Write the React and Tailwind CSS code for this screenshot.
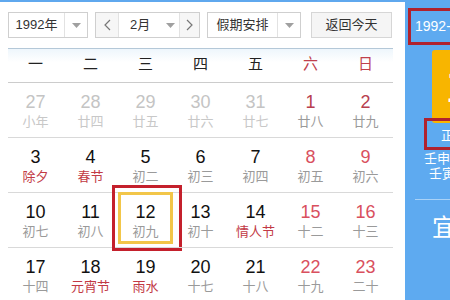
import React from 'react';

const FONT = { fontFamily: '"Liberation Sans", "Noto Sans CJK SC", sans-serif' };

const weekdays = ['一', '二', '三', '四', '五', '六', '日'];

// t: p = previous month, d = early weekend, n = normal, w = weekend
const rows = [
  [
    { d: 27, l: '小年', t: 'p' },
    { d: 28, l: '廿四', t: 'p' },
    { d: 29, l: '廿五', t: 'p' },
    { d: 30, l: '廿六', t: 'p' },
    { d: 31, l: '廿七', t: 'p' },
    { d: 1, l: '廿八', t: 'd' },
    { d: 2, l: '廿九', t: 'd' },
  ],
  [
    { d: 3, l: '除夕', t: 'n', h: true },
    { d: 4, l: '春节', t: 'n', h: true },
    { d: 5, l: '初二', t: 'n' },
    { d: 6, l: '初三', t: 'n' },
    { d: 7, l: '初四', t: 'n' },
    { d: 8, l: '初五', t: 'w' },
    { d: 9, l: '初六', t: 'w' },
  ],
  [
    { d: 10, l: '初七', t: 'n' },
    { d: 11, l: '初八', t: 'n' },
    { d: 12, l: '初九', t: 'n', sel: true },
    { d: 13, l: '初十', t: 'n' },
    { d: 14, l: '情人节', t: 'n', h: true },
    { d: 15, l: '十二', t: 'w' },
    { d: 16, l: '十三', t: 'w' },
  ],
  [
    { d: 17, l: '十四', t: 'n' },
    { d: 18, l: '元宵节', t: 'n', h: true },
    { d: 19, l: '雨水', t: 'n', h: true },
    { d: 20, l: '十七', t: 'n' },
    { d: 21, l: '十八', t: 'n' },
    { d: 22, l: '十九', t: 'w' },
    { d: 23, l: '二十', t: 'w' },
  ],
];

const Arrow = () => (
  <svg width="9" height="5" viewBox="0 0 9 5">
    <path d="M0 0 L9 0 L4.5 5 Z" fill="#a0a0a0" />
  </svg>
);

const Chevron = ({ dir }) => (
  <svg width="7" height="12" viewBox="0 0 7 12">
    <path
      d={dir === 'left' ? 'M6 1 L1 6 L6 11' : 'M1 1 L6 6 L1 11'}
      fill="none"
      stroke="#777"
      strokeWidth="1.2"
    />
  </svg>
);

const Cell = ({ c }) => {
  const numColor =
    c.t === 'p' ? 'text-[#c4c4c4]' : c.t === 'd' ? 'text-[#b8404f]' : c.t === 'w' ? 'text-[#d9505e]' : 'text-[#111]';
  const lunarColor =
    c.t === 'p' ? 'text-[#c8c8c8]' : c.h ? 'text-[#c23a45]' : 'text-[#9a9a9a]';
  return (
    <div className="relative h-[55px] w-[55px] border-b border-[#d9d9d9]">
      {c.sel && (
        <>
          <div className="absolute left-0 top-[-1px] h-[52px] w-[55px] border-[3px] border-[#f2c649]" />
          <div className="absolute left-[-6px] top-[-8px] h-[66px] w-[70px] border-[3px] border-[#c4202c]" />
        </>
      )}
      <div className="relative flex flex-col items-center pt-[8px]">
        <span className={`text-[18px] leading-[22px] ${numColor}`}>{c.d}</span>
        <span className={`text-[13px] leading-[17px] ${lunarColor}`}>{c.l}</span>
      </div>
    </div>
  );
};

const App = () => {
  return (
    <div className="flex h-[300px] w-[450px] overflow-hidden bg-white" style={FONT}>
      {/* Calendar */}
      <div className="w-[405px] border-t-2 border-[#5fa8ee] px-[8px] pt-[10px]">
        <div className="flex h-[26px] items-stretch text-[13px] text-[#333]">
          <div className="flex w-[80px] border border-[#cfcfcf]">
            <div className="flex w-[55px] items-center justify-center">1992年</div>
            <div className="flex flex-1 items-center justify-center border-l border-[#e2e2e2]">
              <Arrow />
            </div>
          </div>
          <div className="ml-[7px] flex w-[105px] border border-[#cfcfcf]">
            <div className="flex w-[22px] items-center justify-center bg-[#f6f6f6]">
              <Chevron dir="left" />
            </div>
            <div className="flex w-[62px] items-center border-x border-[#e2e2e2] pl-[11px]">
              <span>2月</span>
              <span className="ml-[16px] flex">
                <Arrow />
              </span>
            </div>
            <div className="flex flex-1 items-center justify-center bg-[#f6f6f6]">
              <Chevron dir="right" />
            </div>
          </div>
          <div className="ml-[7px] flex w-[94px] border border-[#cfcfcf]">
            <div className="flex w-[69px] items-center justify-center">假期安排</div>
            <div className="flex flex-1 items-center justify-center border-l border-[#e2e2e2]">
              <Arrow />
            </div>
          </div>
          <div className="ml-[10px] flex w-[81px] items-center justify-center border border-[#d6d6d6] bg-[#f5f5f5]">
            返回今天
          </div>
        </div>

        <div className="mt-[10px] h-px w-[385px] bg-[#b4c8d8]" />

        <div className="grid h-[34px] w-[385px] grid-cols-7 border-b border-[#cccccc] bg-gradient-to-b from-[#eef6fc] to-white to-40%">
          {weekdays.map((w, i) => (
            <div
              key={w}
              className={`flex items-center justify-center pb-[2px] text-[15px] ${i >= 5 ? 'text-[#c0404c]' : 'text-[#222]'}`}
            >
              {w}
            </div>
          ))}
        </div>

        <div className="w-[385px]">
          {rows.map((r, ri) => (
            <div key={ri} className="grid grid-cols-7">
              {r.map((c) => (
                <Cell key={c.d + '-' + ri} c={c} />
              ))}
            </div>
          ))}
        </div>
      </div>

      {/* Side panel */}
      <div className="w-[45px] overflow-hidden bg-[#5eaaf0]">
        <div className="flex w-[160px] flex-col pt-[8px] text-white">
          <div className="ml-[3px] flex h-[37px] items-center border-[3px] border-[#b0222e] pl-[4px] text-[14px]">
            1992-02-12 星期三
          </div>
          <div className="ml-[27px] mt-[5px] h-[73px] w-[100px] rounded-[3px] bg-[#f8b500] pl-[13px] pt-[10px] text-[48px] leading-[52px]">
            12
          </div>
          <div className="ml-[19px] mt-[-5px] flex h-[32px] w-[100px] items-end border-[3px] border-[#b0222e] pb-[2px] pl-[14px] text-[13px]">
            正月十二
          </div>
          <div className="ml-[19px] mt-px text-[13px] leading-[15px]">壬申年 猴</div>
          <div className="ml-[24px] text-[13px] leading-[16px]">壬寅月 丙午日</div>
          <div className="ml-[10px] mt-[17px] h-px w-[120px] bg-[#a9d2f7]" />
          <div className="ml-[27px] mt-[14px] text-[24px] leading-[28px]">宜</div>
        </div>
      </div>
    </div>
  );
};

export default App;
